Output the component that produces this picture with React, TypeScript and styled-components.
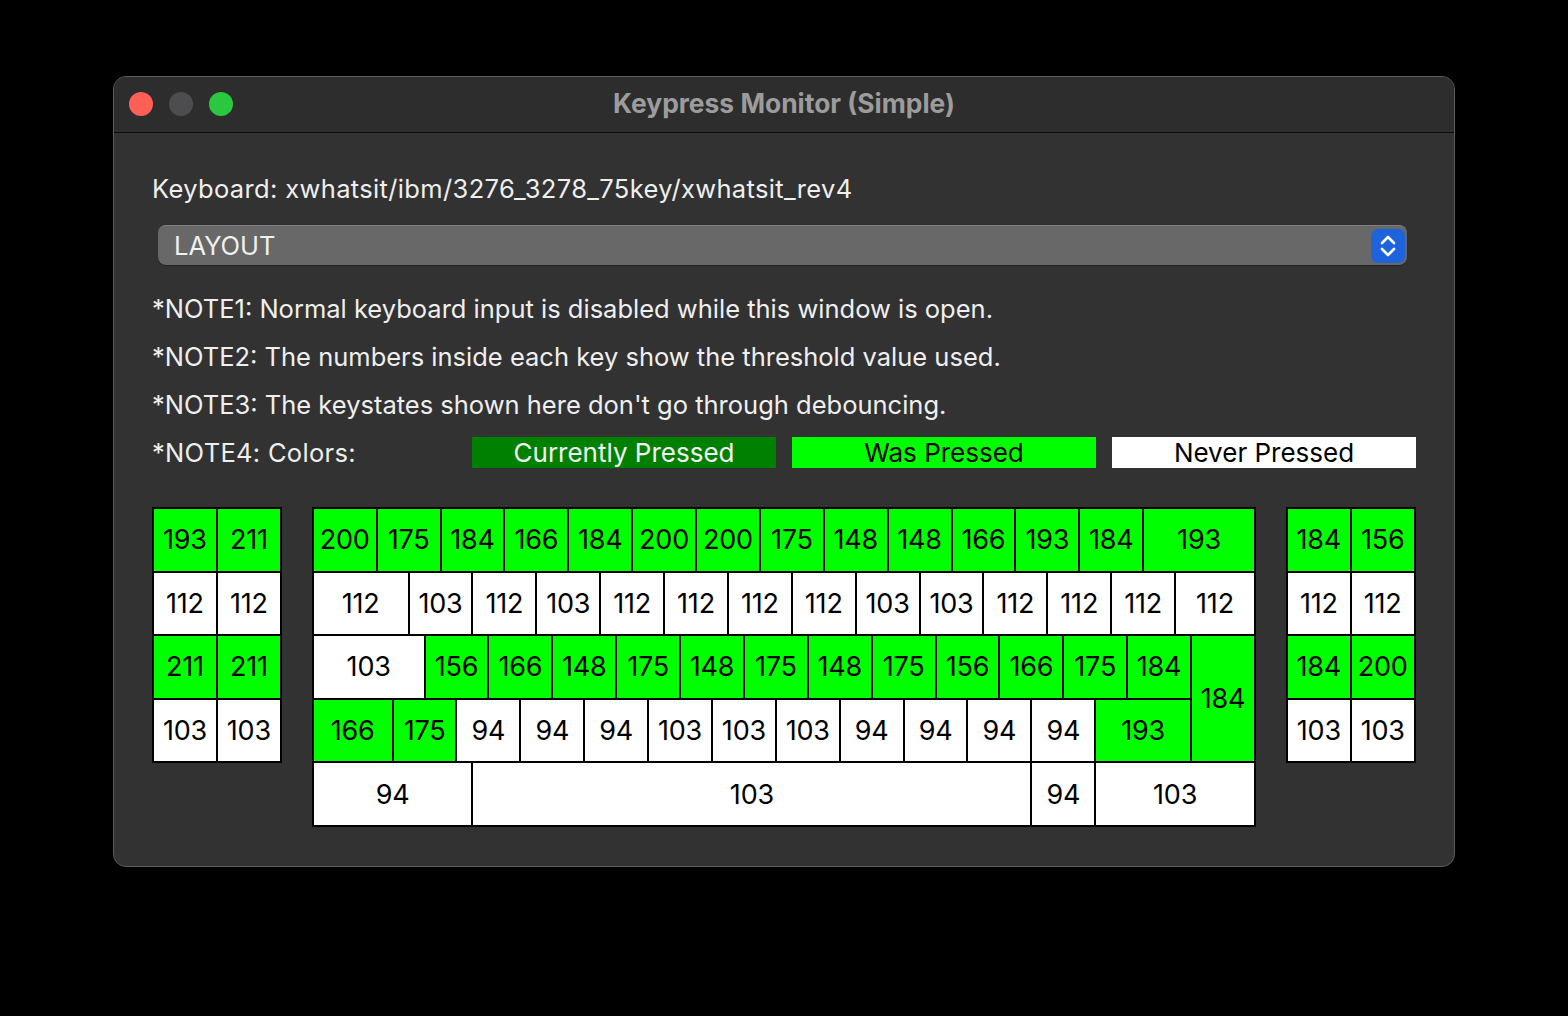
import React from "react";
import styled, { createGlobalStyle } from "styled-components";

const Global = createGlobalStyle`
  html, body { margin: 0; padding: 0; background: #000; }
  body { font-family: Inter, "Noto Sans", "Liberation Sans", sans-serif; }
`;

const Page = styled.div`
  width: 1568px;
  height: 1016px;
  padding: 76px 0 0 113px;
  box-sizing: border-box;
`;

const Window = styled.div`
  width: 1342px;
  height: 791px;
  box-sizing: border-box;
  background: #323232;
  border-radius: 13px;
  border: 1px solid #5c5c5c;
  overflow: hidden;
  display: flex;
  flex-direction: column;
`;

const TitleBar = styled.div`
  height: 55px;
  flex: none;
  background: #2d2d2e;
  border-bottom: 1px solid #0c0c0c;
  display: flex;
  align-items: center;
  position: relative;
  padding-left: 15px;
  gap: 16px;
`;

const Light = styled.span<{ $c: string }>`
  width: 24px;
  height: 24px;
  margin-bottom: 2px;
  border-radius: 50%;
  background: ${(p) => p.$c};
`;

const Title = styled.div`
  position: absolute;
  left: 0;
  right: 0;
  top: 0;
  bottom: 3px;
  display: flex;
  align-items: center;
  justify-content: center;
  font-weight: 700;
  font-size: 26.4px;
  color: #9c9c9c;
  pointer-events: none;
`;

const Content = styled.div`
  padding: 41px 38px 0 38px;
  display: flex;
  flex-direction: column;
  color: #efefef;
  font-size: 25.5px;
`;

const Line = styled.div<{ $mt?: number; $ls?: number }>`
  height: 30px;
  line-height: 30px;
  margin-top: ${(p) => p.$mt ?? 0}px;
  letter-spacing: ${(p) => p.$ls ?? 0}px;
  white-space: nowrap;
`;

const Select = styled.div`
  margin: 21px 9px 0 6px;
  height: 40px;
  box-sizing: border-box;
  background: #686868;
  border-radius: 8px;
  border-top: 1px solid #808080;
  box-shadow: 0 1px 1px rgba(0, 0, 0, 0.3);
  display: flex;
  align-items: center;
  justify-content: space-between;
  padding: 0 2px 0 16px;
  color: #f0f0f0;
  font-size: 25.5px;
`;

const Stepper = styled.div`
  width: 34px;
  height: 34px;
  border-radius: 7px;
  background: #1d64dc;
  display: flex;
  align-items: center;
  justify-content: center;
`;

const LegendRow = styled.div`
  margin-top: 17px;
  height: 31px;
  display: flex;
  align-items: center;
`;

const LegendLabel = styled.div`
  width: 320px;
  flex: none;
  letter-spacing: 0.3px;
`;

const Legend = styled.div<{ $bg: string; $fg: string }>`
  flex: none;
  width: 304px;
  height: 31px;
  margin-right: 16px;
  background: ${(p) => p.$bg};
  color: ${(p) => p.$fg};
  display: flex;
  align-items: center;
  justify-content: center;
  font-size: 26px;
  &:last-child { margin-right: 0; }
`;

const Keyboard = styled.div`
  margin-top: 39px;
  display: flex;
  align-items: flex-start;
  gap: 30px;
`;

const Block = styled.div<{ $cols: number; $rows: number }>`
  display: grid;
  grid-template-columns: repeat(${(p) => p.$cols}, 15.97px);
  grid-template-rows: repeat(${(p) => p.$rows}, 63.6px);
  border: 1px solid #000;
  background: #000;
`;

const Key = styled.div<{ $w: number; $h: number; $s: "w" | "g" }>`
  grid-column: span ${(p) => p.$w};
  grid-row: span ${(p) => p.$h};
  box-sizing: border-box;
  border: 1px solid #000;
  background: ${(p) => (p.$s === "g" ? "#00ff00" : "#ffffff")};
  color: #000;
  font-size: 27px;
  display: flex;
  align-items: center;
  justify-content: center;
  letter-spacing: -0.2px;
`;

type K = { l: number; w: number; h?: number; s: "w" | "g" };

const u = (labels: number[], s: "w" | "g", w = 4): K[] => labels.map((l) => ({ l, w, s }));

const leftBlock: K[] = [
  ...u([193, 211], "g"),
  ...u([112, 112], "w"),
  ...u([211, 211], "g"),
  ...u([103, 103], "w"),
];

const rightBlock: K[] = [
  ...u([184, 156], "g"),
  ...u([112, 112], "w"),
  ...u([184, 200], "g"),
  ...u([103, 103], "w"),
];

const mainBlock: K[] = [
  ...u([200, 175, 184, 166, 184, 200, 200, 175, 148, 148, 166, 193, 184], "g"),
  { l: 193, w: 7, s: "g" },
  { l: 112, w: 6, s: "w" },
  ...u([103, 112, 103, 112, 112, 112, 112, 103, 103, 112, 112, 112], "w"),
  { l: 112, w: 5, s: "w" },
  { l: 103, w: 7, s: "w" },
  ...u([156, 166, 148, 175, 148, 175, 148, 175, 156, 166, 175, 184], "g"),
  { l: 184, w: 4, h: 2, s: "g" },
  { l: 166, w: 5, s: "g" },
  { l: 175, w: 4, s: "g" },
  ...u([94, 94, 94, 103, 103, 103, 94, 94, 94, 94], "w"),
  { l: 193, w: 6, s: "g" },
  { l: 94, w: 10, s: "w" },
  { l: 103, w: 35, s: "w" },
  { l: 94, w: 4, s: "w" },
  { l: 103, w: 10, s: "w" },
];

const KeyBlock = ({ keys, cols, rows }: { keys: K[]; cols: number; rows: number }) => (
  <Block $cols={cols} $rows={rows}>
    {keys.map((k, i) => (
      <Key key={i} $w={k.w} $h={k.h ?? 1} $s={k.s}>
        {k.l}
      </Key>
    ))}
  </Block>
);

export default function App() {
  return (
    <>
      <Global />
      <Page>
        <Window>
          <TitleBar>
            <Light $c="#fe5f57" />
            <Light $c="#4d4d50" />
            <Light $c="#2ac840" />
            <Title>Keypress Monitor (Simple)</Title>
          </TitleBar>
          <Content>
            <Line $ls={0.35}>Keyboard: xwhatsit/ibm/3276_3278_75key/xwhatsit_rev4</Line>
            <Select>
              <span>LAYOUT</span>
              <Stepper>
                <svg width="18" height="26" viewBox="0 0 18 26" fill="none">
                  <path d="M3 10 L9 4 L15 10" stroke="#fff" strokeWidth="2.6" strokeLinecap="round" strokeLinejoin="round" />
                  <path d="M3 16 L9 22 L15 16" stroke="#fff" strokeWidth="2.6" strokeLinecap="round" strokeLinejoin="round" />
                </svg>
              </Stepper>
            </Select>
            <Line $mt={29}>*NOTE1: Normal keyboard input is disabled while this window is open.</Line>
            <Line $mt={18}>*NOTE2: The numbers inside each key show the threshold value used.</Line>
            <Line $mt={18}>*NOTE3: The keystates shown here don't go through debouncing.</Line>
            <LegendRow>
              <LegendLabel>*NOTE4: Colors:</LegendLabel>
              <Legend $bg="#008000" $fg="#f2f2f2">Currently Pressed</Legend>
              <Legend $bg="#00ff00" $fg="#000">Was Pressed</Legend>
              <Legend $bg="#ffffff" $fg="#000">Never Pressed</Legend>
            </LegendRow>
            <Keyboard>
              <KeyBlock keys={leftBlock} cols={8} rows={4} />
              <KeyBlock keys={mainBlock} cols={59} rows={5} />
              <KeyBlock keys={rightBlock} cols={8} rows={4} />
            </Keyboard>
          </Content>
        </Window>
      </Page>
    </>
  );
}
